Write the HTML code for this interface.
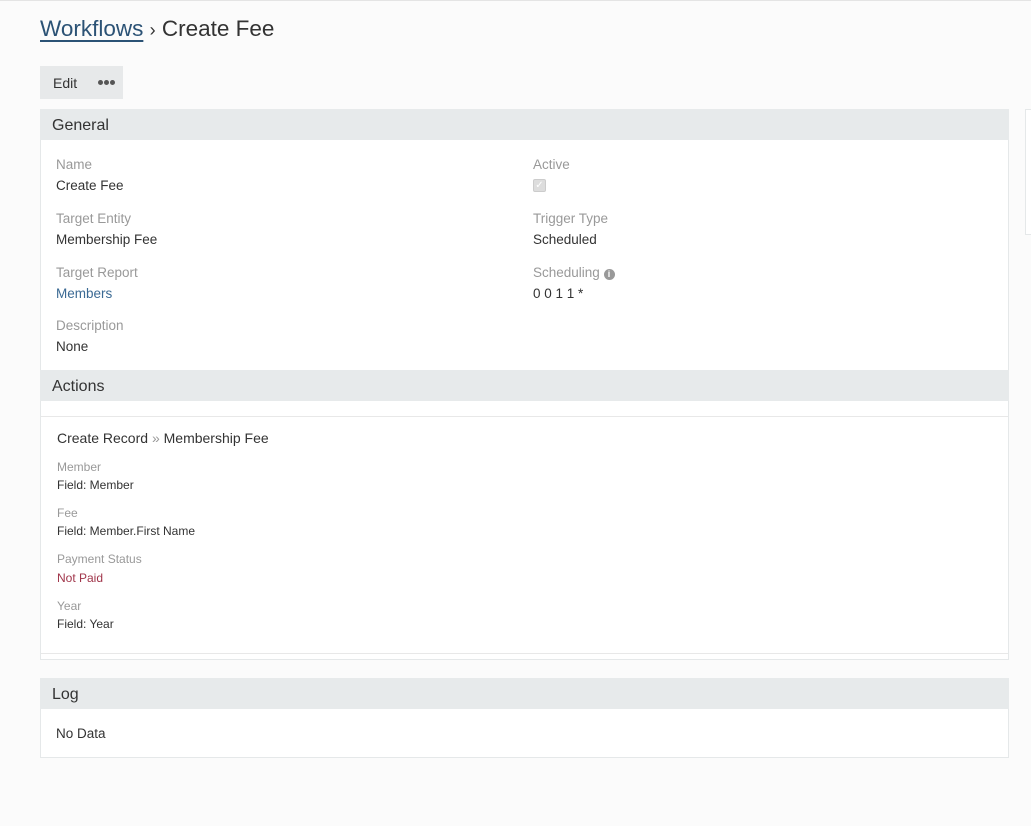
<!DOCTYPE html>
<html><head><style>
body{margin:0;background:#fbfbfb;font-family:"Liberation Sans",sans-serif;color:#333;width:1031px;height:826px;overflow:hidden;position:relative}
.topline{position:absolute;left:0;top:0;width:1031px;height:1px;background:#e4e4e4}
.abs{position:absolute;white-space:nowrap}
.title{left:40px;top:16px;font-size:22.5px;color:#333}
.title a{color:#2b5275;text-decoration:underline;text-decoration-thickness:2px;text-underline-offset:4px}
.btn{left:40px;top:66px;width:83px;height:33px;background:#e7e9ea}
.panel{position:absolute;left:40px;width:969px;background:#fff;border:1px solid #e5e8e9;border-top:none;box-sizing:border-box}
.hdr{position:absolute;left:40px;width:969px;height:31px;background:#e7eaeb;font-size:16px;color:#333;padding-left:12px;box-sizing:border-box;line-height:33px}
.lbl{font-size:13.5px;color:#999}
.val{font-size:13.5px;color:#333}
.sl{font-size:11.5px;color:#999}
.sv{font-size:11.5px;color:#333}
.dot{position:absolute;top:14px;width:5px;height:5px;border-radius:50%;background:#555}
</style></head><body>
<div class="topline"></div>
<div class="abs title"><a>Workflows</a> <span style="font-size:18px">›</span> Create Fee</div>
<div class="abs btn"><span class="abs" style="left:13px;top:9px;font-size:14px">Edit</span><div class="dot" style="left:58px"></div><div class="dot" style="left:64px"></div><div class="dot" style="left:70px"></div></div>

<div class="panel" style="top:109px;height:551px"></div>
<div class="hdr" style="top:109px">General</div>
<div class="abs lbl" style="left:56px;top:157px">Name</div>
<div class="abs val" style="left:56px;top:178px">Create Fee</div>
<div class="abs lbl" style="left:56px;top:211px">Target Entity</div>
<div class="abs val" style="left:56px;top:232px">Membership Fee</div>
<div class="abs lbl" style="left:56px;top:265px">Target Report</div>
<div class="abs val" style="left:56px;top:286px;color:#3b6a94">Members</div>
<div class="abs lbl" style="left:56px;top:318px">Description</div>
<div class="abs val" style="left:56px;top:339px">None</div>
<div class="abs lbl" style="left:533px;top:157px">Active</div>
<div class="abs" style="left:533px;top:179px;width:11px;height:11px;border:1px solid #ccc;background:#ddd;border-radius:2px;font-size:10px;color:#fff;line-height:11px;text-align:center">✓</div>
<div class="abs lbl" style="left:533px;top:265px">Scheduling <span style="display:inline-block;width:11px;height:11px;border-radius:50%;background:#999;color:#fff;font-size:9px;line-height:11px;text-align:center;font-weight:bold;vertical-align:0">i</span></div>
<div class="abs lbl" style="left:533px;top:211px">Trigger Type</div>
<div class="abs val" style="left:533px;top:232px">Scheduled</div>
<div class="abs val" style="left:533px;top:286px">0 0 1 1 *</div>

<div class="hdr" style="top:370px">Actions</div>
<div class="abs" style="left:41px;top:416px;width:967px;height:1px;background:#e8e8e8"></div>
<div class="abs" style="left:41px;top:653px;width:967px;height:1px;background:#e8e8e8"></div>
<div class="abs val" style="left:57px;top:430px;font-size:14px">Create Record <span style="color:#999">»</span> Membership Fee</div>
<div class="abs sl" style="left:57px;top:460px;font-size:12px">Member</div>
<div class="abs sv" style="left:57px;top:478px;font-size:12px">Field: Member</div>
<div class="abs sl" style="left:57px;top:506px;font-size:12px">Fee</div>
<div class="abs sv" style="left:57px;top:524px;font-size:12px">Field: Member.First Name</div>
<div class="abs sl" style="left:57px;top:552px;font-size:12px">Payment Status</div>
<div class="abs sv" style="left:57px;top:571px;color:#a0354a;font-size:12px">Not Paid</div>
<div class="abs sl" style="left:57px;top:599px;font-size:12px">Year</div>
<div class="abs sv" style="left:57px;top:617px;font-size:12px">Field: Year</div>

<div class="panel" style="top:678px;height:80px"></div>
<div class="hdr" style="top:678px">Log</div>
<div class="abs val" style="left:56px;top:726px">No Data</div>

<div class="abs" style="left:1025px;top:109px;width:10px;height:124px;border:1px solid #e5e8e9;background:#fff"></div>
</body></html>
